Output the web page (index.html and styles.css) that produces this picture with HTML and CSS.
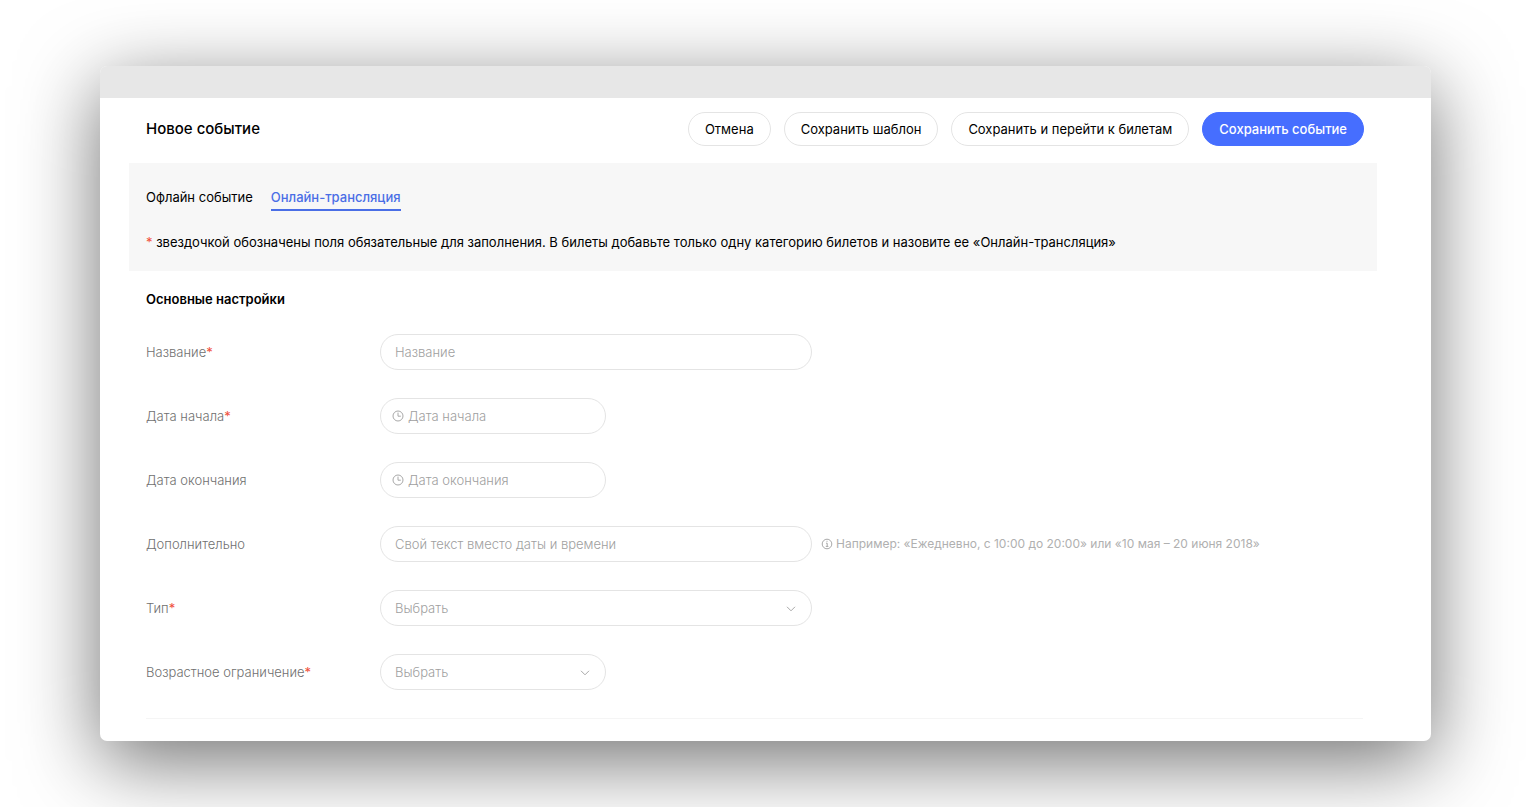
FILE: index.html
```html
<!DOCTYPE html>
<html lang="ru">
<head>
<meta charset="utf-8">
<title>Новое событие</title>
<link rel="stylesheet" href="styles.css">
</head>
<body>
<form class="window">
  <div class="titlebar"></div>
  <header class="header">
    <h1 class="title">Новое событие</h1>
    <div class="actions">
      <button type="button" class="btn">Отмена</button>
      <button type="button" class="btn">Сохранить шаблон</button>
      <button type="button" class="btn">Сохранить и перейти к билетам</button>
      <button type="submit" class="btn btn-primary">Сохранить событие</button>
    </div>
  </header>
  <section class="intro">
    <nav class="tabs">
      <a class="tab" href="#offline">Офлайн событие</a>
      <a class="tab tab-active" href="#online" aria-current="page">Онлайн-трансляция</a>
    </nav>
    <p class="note"><span class="star">*</span> звездочкой обозначены поля обязательные для заполнения. В билеты добавьте только одну категорию билетов и назовите ее «Онлайн-трансляция»</p>
  </section>
  <main class="settings">
    <h2 class="subtitle">Основные настройки</h2>
    <div class="row">
      <label class="label" for="name">Название<span class="star">*</span></label>
      <input class="field" id="name" type="text" placeholder="Название">
    </div>
    <div class="row">
      <label class="label" for="start">Дата начала<span class="star">*</span></label>
      <div class="control control-short">
        <input class="field field-date" id="start" type="text" placeholder="Дата начала">
        <svg class="clock" viewBox="0 0 12 12"><circle cx="6" cy="6" r="5"/><path d="M6 2.6v3.6h2.8"/></svg>
      </div>
    </div>
    <div class="row">
      <label class="label" for="end">Дата окончания</label>
      <div class="control control-short">
        <input class="field field-date" id="end" type="text" placeholder="Дата окончания">
        <svg class="clock" viewBox="0 0 12 12"><circle cx="6" cy="6" r="5"/><path d="M6 2.6v3.6h2.8"/></svg>
      </div>
    </div>
    <div class="row">
      <label class="label" for="extra">Дополнительно</label>
      <input class="field" id="extra" type="text" placeholder="Свой текст вместо даты и времени">
      <p class="hint"><svg class="info" viewBox="0 0 12 12"><circle cx="6" cy="6" r="4.8"/><path d="M5 5.2h1.2v3.1M4.8 8.4h2.6M5.5 3.3h1"/></svg>Например: «Ежедневно, с 10:00 до 20:00» или «10 мая – 20 июня 2018»</p>
    </div>
    <div class="row">
      <label class="label" for="type">Тип<span class="star">*</span></label>
      <div class="control">
        <select class="field" id="type"><option>Выбрать</option></select>
        <svg class="chevron" viewBox="0 0 10 6"><path d="M1 .8l4 4 4-4"/></svg>
      </div>
    </div>
    <div class="row">
      <label class="label" for="age">Возрастное ограничение<span class="star">*</span></label>
      <div class="control control-short">
        <select class="field" id="age"><option>Выбрать</option></select>
        <svg class="chevron" viewBox="0 0 10 6"><path d="M1 .8l4 4 4-4"/></svg>
      </div>
    </div>
    <hr class="divider">
  </main>
</form>
</body>
</html>
```
FILE: styles.css
```css
* {
  box-sizing: border-box;
}

body {
  margin: 0;
  padding: 66px 100px;
  background: #fff;
  color: #000;
  font: 13px/20px Inter, "Liberation Sans", sans-serif;
}

h1, h2, p {
  margin: 0;
}

input, select, button {
  font: inherit;
}

.window {
  background: #fff;
  border-radius: 7px;
  box-shadow: 0 20px 80px rgba(0, 0, 0, 0.56);
  overflow: hidden;
}

.titlebar {
  height: 32px;
  background: #e7e7e7;
}

.header {
  display: flex;
  align-items: center;
  justify-content: space-between;
  padding: 14px 67px 17px 46px;
}

.title {
  font-size: 15px;
  font-weight: 500;
}

.actions {
  display: flex;
  gap: 13px;
}

.btn {
  height: 34px;
  padding: 0 16px;
  border: 1px solid #e4e4e4;
  border-radius: 17px;
  background: #fff;
  color: #000;
  white-space: nowrap;
}

.btn-primary {
  border-color: #466eff;
  background: #466eff;
  color: #fff;
  font-weight: 500;
}

.intro {
  margin: 0 54px 0 29px;
  padding: 24px 17px 19px;
  background: #f7f7f7;
}

.tabs {
  display: flex;
  gap: 18px;
}

.tab {
  padding-bottom: 2px;
  border-bottom: 2px solid transparent;
  color: #000;
  text-decoration: none;
}

.tab-active {
  border-color: #4a6ee6;
  color: #4a6ee6;
  font-weight: 500;
}

.note {
  margin-top: 21px;
}

.star {
  color: #f0503c;
  font-weight: 400;
}

.settings {
  padding: 18px 68px 22px 46px;
}

.subtitle {
  margin-bottom: 25px;
  font-size: 13px;
  font-weight: 600;
}

.row {
  display: flex;
  align-items: center;
  margin-bottom: 28px;
  font-weight: 300;
}

.label {
  width: 234px;
  color: #707070;
}

.control {
  position: relative;
  width: 432px;
}

.control-short {
  width: 226px;
}

.field {
  display: block;
  width: 432px;
  height: 36px;
  padding: 0 14px;
  border: 1px solid #e4e4e4;
  border-radius: 18px;
  background: #fff;
  color: #a0a0a0;
  appearance: none;
}

.control .field {
  width: 100%;
}

.field::placeholder {
  color: #a0a0a0;
  opacity: 1;
}

.field-date {
  padding-left: 27px;
}

.clock {
  position: absolute;
  left: 12px;
  top: 12px;
  width: 12px;
  height: 12px;
}

.chevron {
  position: absolute;
  right: 16px;
  top: 16px;
  width: 10px;
  height: 6px;
  pointer-events: none;
}

.clock, .chevron, .info {
  fill: none;
  stroke: #a8a8a8;
  stroke-width: 1;
}

.hint {
  display: flex;
  align-items: center;
  gap: 3px;
  margin-left: 9px;
  color: #b0b0b0;
  font-size: 12px;
  font-weight: 400;
}

.info {
  width: 12px;
  height: 12px;
}

.divider {
  margin: 0;
  border: 0;
  border-top: 1px solid #f5f5f5;
}
```
